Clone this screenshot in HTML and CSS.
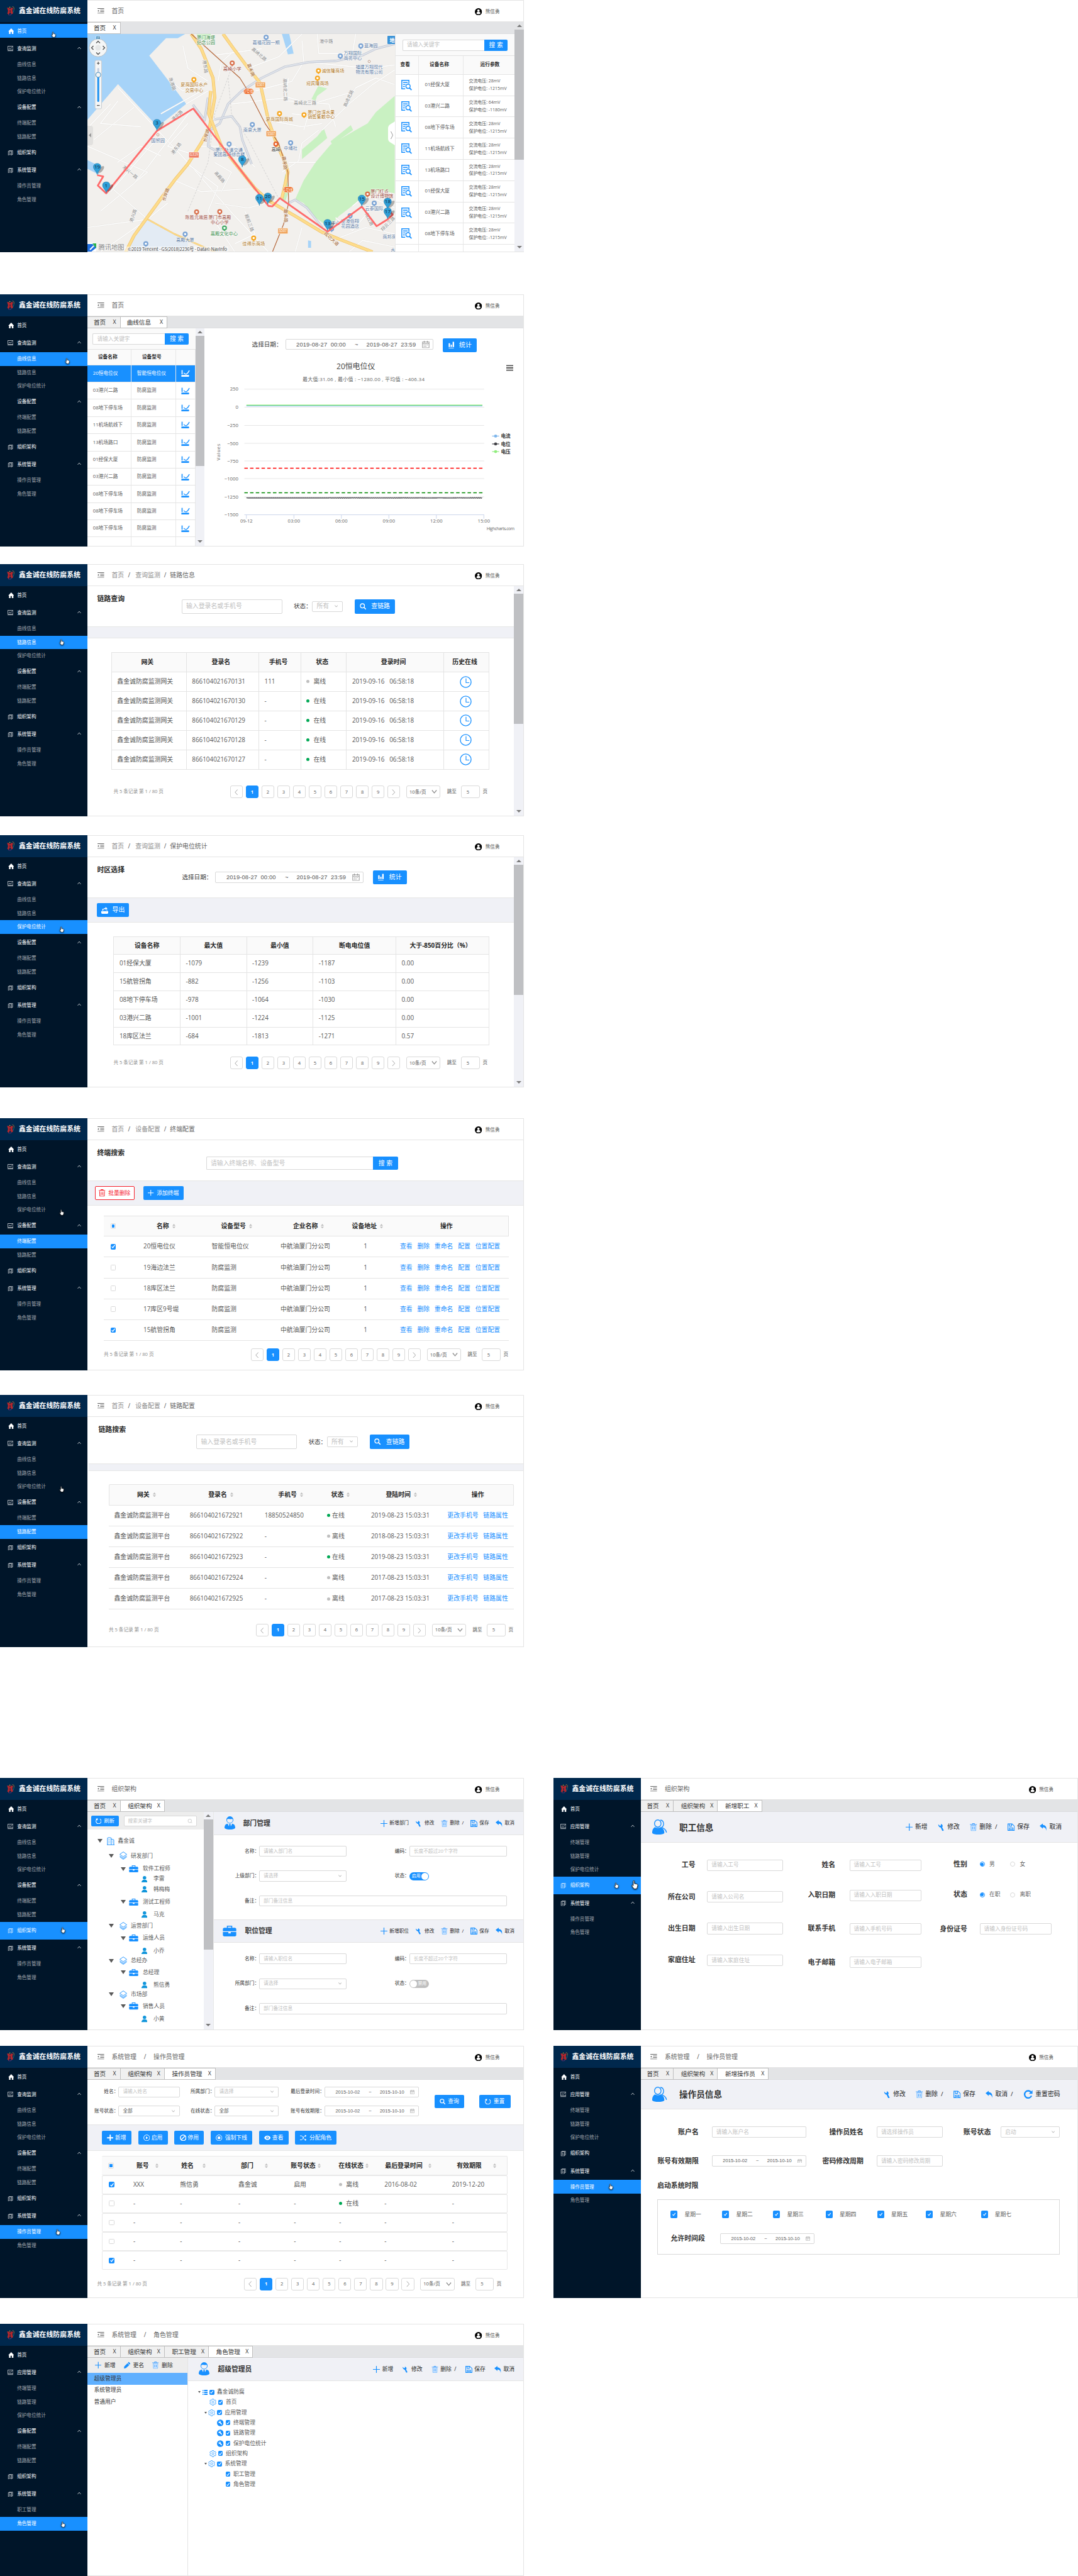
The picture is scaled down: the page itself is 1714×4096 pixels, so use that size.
FILE: index.html
```html
<!DOCTYPE html>
<html lang="zh-CN">
<head>
<meta charset="utf-8">
<title>鑫金诚在线防腐系统</title>
<link rel="stylesheet" href="styles.css">
</head>
<body>
<svg class="defs" width="0" height="0">
  <symbol id="i-logo" viewBox="0 0 60 76"><path fill="#b3282d" d="M0 12 16 12 25 22 36 11 50 14 44 34 50 60 36 66 25 50 14 68 2 62 8 38z"/><path fill="#00284d" d="M23 30h4l2 18h-7z"/><path fill="none" stroke="#f0a030" stroke-width="3" d="M44 2c12 0 16 12 13 26"/><path fill="none" stroke="#2aa198" stroke-width="3" d="M57 28c-1 12-4 18-8 24"/><path fill="none" stroke="#c0389a" stroke-width="3" d="M38 66c-8 10-20 10-28 4"/><circle cx="23" cy="8" r="4" fill="#f5c518"/></symbol>
  <symbol id="i-home" viewBox="0 0 16 16"><path fill="currentColor" d="M8 0 16 8.5H14V16H9.7V10H6.3V16H2V8.5H0z"/></symbol>
  <symbol id="i-chart" viewBox="0 0 16 14"><path fill="none" stroke="currentColor" stroke-width="1.2" d="M.6.6h14.8v10.2H.6zM0 13.3h16M3 7l2-2 2 2 2-2 1 1 3-3"/></symbol>
  <symbol id="i-doc" viewBox="0 0 14 16"><path fill="none" stroke="currentColor" stroke-width="1.2" d="M3.6 2.5V.6h9.8v12h-2M.6 2.6h9.8v12.8H.6zM3 6h3M3 9h5M3 12h5"/></symbol>
  <symbol id="i-up" viewBox="0 0 10 7"><path fill="none" stroke="currentColor" stroke-width="1.4" d="m.8 6.4 4.2-5 4.2 5"/></symbol>
  <symbol id="i-down" viewBox="0 0 10 7"><path fill="none" stroke="currentColor" stroke-width="1.5" d="m.8.6 4.2 5 4.2-5"/></symbol>
  <symbol id="i-left" viewBox="0 0 7 12"><path fill="none" stroke="currentColor" d="M6 .5 1 6l5 5.500"/></symbol>
  <symbol id="i-right" viewBox="0 0 7 12"><path fill="none" stroke="currentColor" d="m1 .5 5 5.500-5 5.500"/></symbol>
  <symbol id="i-fold" viewBox="0 0 20 16"><path fill="none" stroke="currentColor" stroke-width="1.8" d="M0 1h20M8 5.700h12M8 10.300h12M0 15h20"/><path fill="currentColor" d="M0 8l4-2.800v5.600z"/></symbol>
  <symbol id="i-user" viewBox="0 0 20 20"><circle cx="10" cy="10" r="10" fill="#000"/><circle cx="10" cy="6.800" r="3.400" fill="#fff"/><path fill="#fff" d="M4.500 14.500c0-4 3-4.500 5.500-4.500s5.500.5 5.500 4.500c-1.500 3-9.500 3-11 0z"/></symbol>
  <symbol id="i-hand" viewBox="0 0 16 20"><path fill="#fff" stroke="#222" stroke-width="1.300" d="M5 1.500c0-1.300 2.600-1.300 2.600 0V7l6 1.500c1.500.4 1.600 1.500 1.400 3l-1 4.500-1.500 3H6.500L2 12.500c-1-1.600.6-2.600 1.800-1.500L5 12z"/></symbol>
  <symbol id="i-search" viewBox="0 0 16 16"><circle cx="6.500" cy="6.500" r="5" fill="none" stroke="currentColor" stroke-width="2"/><path stroke="currentColor" stroke-width="2.400" d="m10.500 10.500 4.700 4.700"/></symbol>
  <symbol id="i-lens" viewBox="0 0 16 16"><circle cx="7" cy="7" r="6" fill="none" stroke="currentColor"/><path stroke="currentColor" d="m11.300 11.300 4.200 4.200"/></symbol>
  <symbol id="i-bars" viewBox="0 0 16 20"><path fill="currentColor" d="M0 5h4v11H0zM6 9h3.500v7H6zM11.500 1H16v15h-4.500zM0 18.500h15V20H0z"/></symbol>
  <symbol id="i-export" viewBox="0 0 18 18"><path fill="currentColor" d="M0 11h18v5.500L16 18H2l-2-1.500zM3 10V5h3v1.500H5V10h9V7h1.500v3z"/><path fill="currentColor" d="M6 8c0-4 2-5 5-5V0l5 4-5 4V5.500c-3 0-4 1-5 2.500z"/></symbol>
  <symbol id="i-trash" viewBox="0 0 16 18"><path fill="none" stroke="currentColor" stroke-width="1.600" d="M0 3h16M5.500 3V.8h5V3M2 5l.5 12.200h11L14 5M6 7v7M10 7v7"/></symbol>
  <symbol id="i-bin" viewBox="0 0 16 18"><path fill="#cfe6ff" stroke="#69b4ff" stroke-width="1.200" d="M2.300 5l.4 12.300h10.600L13.700 5z"/><path fill="none" stroke="#3d9dff" stroke-width="1.400" d="M0 3h16M5.500 3V.8h5V3M6 8v6M10 8v6"/></symbol>
  <symbol id="i-plus" viewBox="0 0 16 16"><path stroke="currentColor" stroke-width="1.700" d="M8 0v16M0 8h16"/></symbol>
  <symbol id="i-plusb" viewBox="0 0 16 16"><path stroke="currentColor" stroke-width="3" stroke-linecap="round" d="M8 1.500v13M1.500 8h13"/></symbol>
  <symbol id="i-cal" viewBox="0 0 16 16"><path fill="none" stroke="currentColor" stroke-width="1.400" d="M.8 2.500h14.400v12.700H.8zM.8 6h14.400M4.500 0v4M11.500 0v4"/><path stroke="currentColor" stroke-width="1.400" stroke-dasharray="2 1.500" d="M3.500 9h9.500M3.500 12h6"/></symbol>
  <symbol id="i-building" viewBox="0 0 20 20"><path fill="none" stroke="currentColor" stroke-width="1.500" d="M1.500 19V2l4-1.200L11 2v17M11 5l6.500 1.500V19M0 19.200h19.500M4 6h1.500M7 6h1.500M4 10h1.500M7 10h1.500M4 14h1.500M7 14h1.500M13.500 10H15M13.500 14H15"/></symbol>
  <symbol id="i-layers" viewBox="0 0 20 20"><path fill="none" stroke="currentColor" stroke-width="1.400" d="m10 .9 8.500 6-8.500 6-8.500-6zM1.500 10.500l8.500 6 8.500-6M1.500 13.200l8.500 6 8.500-6"/></symbol>
  <symbol id="i-bag" viewBox="0 0 20 16"><path fill="currentColor" d="M6 3V0h8v3h4.500L20 4.500V8.300H0V4.500L1.500 3zM7.500 3h5V1.400h-5zM0 9.300h8.200v2.200h3.600V9.300H20V14.500L18.500 16h-17L0 14.500z"/></symbol>
  <symbol id="i-person" viewBox="0 0 14 15"><circle cx="7" cy="4" r="4" fill="currentColor"/><path fill="currentColor" d="M0 15v-2.500L3.500 8.500h7L14 12.500V15z"/></symbol>
  <symbol id="i-manager" viewBox="0 0 32 40"><circle cx="16" cy="11" r="9.500" fill="none" stroke="currentColor" stroke-width="1.800"/><path fill="currentColor" d="M6 11c0-15 21-14 20 0-2-6-6-2-10-3-4-.5-8-1-10 3zM0 35c0-9 4-12 9-13l7 13 7-13c5 1 9 4 9 13-5 6-27 6-32 0zM14 23h4l1 9-3 4-3-4z"/></symbol>
  <symbol id="i-staff" viewBox="0 0 46 46"><ellipse cx="17" cy="12" rx="10" ry="11" fill="none" stroke="currentColor" stroke-width="2.600"/><path fill="none" stroke="currentColor" stroke-width="2.600" d="M25 1.500c11 1 13 16 4 22 8 4 13 7 14.500 16"/><path fill="currentColor" d="M8 23c6 3 12 3 18 0 8 4 11 9 11 18-4 6-32 6-37 0 0-9 2-14 8-18z"/></symbol>
  <symbol id="i-wrench" viewBox="0 0 16 18"><path fill="currentColor" d="M1 2.500 4.500 6 7 5V1.500l3 2.200c1.500 2 1.300 4-.2 5.500l3.500 6.500c0 2-2.300 2.500-3.500 1.200L6.500 9.800C3 9.500.5 6 1 2.500z"/></symbol>
  <symbol id="i-save" viewBox="0 0 18 18"><path fill="none" stroke="currentColor" stroke-width="1.700" d="M1 1h10l6 5.500V17H1zM4.500 1v5.500H10V1M4.500 17v-6h9v6M6 14h6"/></symbol>
  <symbol id="i-undo" viewBox="0 0 18 18"><path fill="currentColor" d="M0 6 8 0v3.500c7 .5 10 5 8.500 14.500C16 12 13 9.500 8 9.500V13z"/></symbol>
  <symbol id="i-reload" viewBox="0 0 16 16"><path fill="none" stroke="currentColor" stroke-width="1.700" d="M11.500 1.800A7 7 0 1 1 4 2.200"/><path fill="currentColor" d="M0 1.800 6 .5 5 6.500z"/></symbol>
  <symbol id="i-cycle" viewBox="0 0 18 18"><path fill="none" stroke="currentColor" stroke-width="3" d="M15 5a7.300 7.300 0 1 0 .8 7"/><path fill="currentColor" d="M17.800.8V8h-7.300z"/></symbol>
  <symbol id="i-gear" viewBox="0 0 20 20"><path fill="none" stroke="currentColor" stroke-width="1.300" d="M8 1h4l.6 2.600 2 1L17 3.800l2 3.400L17.200 9v2l1.800 1.800-2 3.400-2.400-.8-2 1L12 19H8l-.6-2.600-2-1-2.400.8-2-3.400L2.800 11V9L1 7.200l2-3.400 2.400.8 2-1z"/><circle cx="10" cy="10" r="3" fill="none" stroke="currentColor" stroke-width="1.300"/></symbol>
  <symbol id="i-tool" viewBox="0 0 18 18"><circle cx="9" cy="9" r="9" fill="currentColor"/><path fill="#fff" d="M4 5l2 2 1.500-1.500-1.500-2c3-.5 4.500 1.500 4 4l4 4.500-2 2-4.200-4.500C5.500 10 3.700 8 4 5z"/></symbol>
  <symbol id="i-list" viewBox="0 0 16 16"><path fill="currentColor" d="M0 1h3v3H0zM5 0h11v4H5zM0 7h3v3H0zM5 6h11v4H5zM0 13h3v3H0zM5 12h11v4H5z"/></symbol>
  <symbol id="i-pencil" viewBox="0 0 18 18"><path fill="currentColor" d="M13 0l5 4.500-2.300 2.800-5-4.500zM9.800 3.800l5 4.600L5.500 17 0 18l1-5.500z"/></symbol>
  <symbol id="i-query" viewBox="0 0 30 30"><path fill="none" stroke="currentColor" stroke-width="2.600" d="M11 25H1.500V1.500h20V10M5 7.500h13M5 13h7M5 18.500h5"/><circle cx="19" cy="18" r="6" fill="none" stroke="currentColor" stroke-width="2.600"/><path stroke="currentColor" stroke-width="3.200" d="m23 22.500 6 6"/></symbol>
  <symbol id="i-curve" viewBox="0 0 24 20"><path fill="none" stroke="currentColor" stroke-width="3" d="M2 1v12"/><path fill="none" stroke="currentColor" stroke-width="2.400" d="M7 9c3 4 5 4 8 3 4-2 6-6 8-10"/><path fill="currentColor" d="M0 15h21l2 2.500L21 20H0z"/></symbol>
  <symbol id="i-clock" viewBox="0 0 20 20"><circle cx="10" cy="10" r="9" fill="none" stroke="currentColor" stroke-width="1.400"/><path fill="none" stroke="currentColor" stroke-width="1.200" d="M10.500 4v7H16"/></symbol>
  <symbol id="i-play" viewBox="0 0 18 18"><circle cx="9" cy="9" r="8" fill="none" stroke="currentColor" stroke-width="1.700"/><path fill="currentColor" d="M7 5.300 12.500 9 7 12.700z"/></symbol>
  <symbol id="i-ban" viewBox="0 0 18 18"><circle cx="9" cy="9" r="7.600" fill="none" stroke="currentColor" stroke-width="2.600"/><path stroke="currentColor" stroke-width="2.400" d="M14 4 4 14"/></symbol>
  <symbol id="i-stop" viewBox="0 0 18 18"><circle cx="9" cy="9" r="8" fill="none" stroke="currentColor" stroke-width="1.600"/><path fill="currentColor" d="M5.500 5.500h7v7h-7z"/></symbol>
  <symbol id="i-eye" viewBox="0 0 18 12"><path fill="currentColor" d="M0 6c4-8 14-8 18 0-4 8-14 8-18 0z"/><circle cx="9" cy="6" r="3.400" fill="#1890ff"/><circle cx="9" cy="6" r="1.600" fill="#fff"/></symbol>
  <symbol id="i-shuffle" viewBox="0 0 20 18"><path fill="none" stroke="currentColor" stroke-width="1.900" d="M0 3h4c6 0 5 12 13 12M0 15h4c6 0 5-12 13-12"/><path fill="currentColor" d="M15 0l5 3-5 3.500zM15 11.500l5 3.500-5 3z"/></symbol>
  <symbol id="i-sort" viewBox="0 0 8 12"><path fill="#bfbfbf" d="M4 0l4 5H0zM4 12 0 7h8z"/></symbol>
  <symbol id="i-check" viewBox="0 0 10 10"><path fill="none" stroke="#fff" stroke-width="1.600" d="m2 5.200 2.200 2.300L8.200 2"/></symbol>
  <symbol id="i-pin" viewBox="0 0 26 38"><path fill="#2f9fd8" stroke="#1b6f9f" d="M13 37C12 27 1 22 1 12a12 11 0 0 1 24 0c0 10-11 15-12 25z"/></symbol>
</svg>

<div class="board">

<section class="screen r1">
  <aside class="side" data-menu="monitor" data-active="首页" data-cursor="85,54.500"></aside>
  <div class="main">
    <header data-path="首页"></header>
    <div class="split">
      <div class="overview">
        <nav class="tabs" data-tabs="首页"></nav>
        <div class="overview-body">
          <div class="map"><svg id="map" width="489" height="347"></svg></div>
          <div class="devices">
            <div class="lookup"><div class="input ph">请输入关键字</div><div class="btn go">搜 索</div></div>
            <div class="dev-grid dev-head"><b>查看</b><b>设备名称</b><b>运行参数</b></div>
            <div id="dev-rows"></div>
          </div>
        </div>
      </div>
      <div class="scroll gray"></div>
    </div>
  </div>
</section>

<section class="screen r2">
  <aside class="side" data-menu="monitor" data-active="曲线信息" data-cursor="107,106"></aside>
  <div class="main">
    <header data-path="首页"></header>
    <nav class="tabs" data-tabs="首页,曲线信息"></nav>
    <div class="split">
      <div class="curve-list">
        <div class="lookup"><div class="input ph">请输入关键字</div><div class="btn go">搜 索</div></div>
        <div class="curve-grid curve-head"><b>设备名称</b><b>设备型号</b><b></b></div>
        <div id="curve-rows"></div>
      </div>
      <div class="scroll"></div>
      <div class="curve-chart">
        <div class="query"><span class="lab">选择日期：</span><div class="range big"></div><div class="btn"><svg><use href="#i-bars"/></svg>统计</div></div>
        <svg id="chart" width="507" height="300"></svg>
      </div>
    </div>
  </div>
</section>

<section class="screen r3">
  <aside class="side" data-menu="monitor" data-active="链路信息" data-cursor="97.700,124"></aside>
  <div class="main">
    <header data-path="首页,查询监测,链路信息"></header>
    <div class="split">
      <div class="page">
        <div class="filter"><h2>链路查询</h2>
          <div class="linkbar"><div class="input ph">输入登录名或手机号</div><span class="lab">状态：</span><div class="input sel ph">所有<svg><use href="#i-down"/></svg></div><div class="btn"><svg><use href="#i-search"/></svg>查链路</div></div>
        </div>
        <div class="strip"></div>
        <table class="link-table">
          <colgroup><col><col><col><col><col><col></colgroup>
          <thead><tr><th>网关</th><th>登录名</th><th>手机号</th><th>状态</th><th>登录时间</th><th>历史在线</th></tr></thead>
          <tbody>
            <tr><td>鑫金诚防腐监测网关</td><td>866104021670131</td><td>111</td><td><i class="dot"></i>离线</td><td>2019-09-16 &nbsp; 06:58:18</td><td><svg><use href="#i-clock"/></svg></td></tr>
            <tr><td>鑫金诚防腐监测网关</td><td>866104021670130</td><td>-</td><td><i class="dot on"></i>在线</td><td>2019-09-16 &nbsp; 06:58:18</td><td><svg><use href="#i-clock"/></svg></td></tr>
            <tr><td>鑫金诚防腐监测网关</td><td>866104021670129</td><td>-</td><td><i class="dot on"></i>在线</td><td>2019-09-16 &nbsp; 06:58:18</td><td><svg><use href="#i-clock"/></svg></td></tr>
            <tr><td>鑫金诚防腐监测网关</td><td>866104021670128</td><td>-</td><td><i class="dot on"></i>在线</td><td>2019-09-16 &nbsp; 06:58:18</td><td><svg><use href="#i-clock"/></svg></td></tr>
            <tr><td>鑫金诚防腐监测网关</td><td>866104021670127</td><td>-</td><td><i class="dot on"></i>在线</td><td>2019-09-16 &nbsp; 06:58:18</td><td><svg><use href="#i-clock"/></svg></td></tr>
          </tbody>
        </table>
        <div class="pager"></div>
      </div>
      <div class="scroll"></div>
    </div>
  </div>
</section>

<section class="screen r4">
  <aside class="side" data-menu="monitor" data-active="保护电位统计" data-cursor="97.700,149.500"></aside>
  <div class="main">
    <header data-path="首页,查询监测,保护电位统计"></header>
    <div class="split">
      <div class="page">
        <div class="filter"><h2>时区选择</h2>
          <div class="query"><span class="lab">选择日期：</span><div class="range big"></div><div class="btn"><svg><use href="#i-bars"/></svg>统计</div></div>
        </div>
        <div class="strip"><div class="btn"><svg><use href="#i-export"/></svg>导出</div></div>
        <table class="stat-table">
          <colgroup><col><col><col><col><col></colgroup>
          <thead><tr><th>设备名称</th><th>最大值</th><th>最小值</th><th>断电电位值</th><th>大于-850百分比（%）</th></tr></thead>
          <tbody>
            <tr><td>01经保大厦</td><td>-1079</td><td>-1239</td><td>-1187</td><td>0.00</td></tr>
            <tr><td>15航管拐角</td><td>-882</td><td>-1256</td><td>-1103</td><td>0.00</td></tr>
            <tr><td>08地下停车场</td><td>-978</td><td>-1064</td><td>-1030</td><td>0.00</td></tr>
            <tr><td>03港兴二路</td><td>-1001</td><td>-1224</td><td>-1125</td><td>0.00</td></tr>
            <tr><td>18库区法兰</td><td>-684</td><td>-1813</td><td>-1271</td><td>0.57</td></tr>
          </tbody>
        </table>
        <div class="pager"></div>
      </div>
      <div class="scroll"></div>
    </div>
  </div>
</section>

<section class="screen r5">
  <aside class="side" data-menu="monitor" data-deviceicon="1" data-active="终端配置" data-cursor="97.700,149.800"></aside>
  <div class="main">
    <header data-path="首页,设备配置,终端配置"></header>
    <div class="filter"><h2>终端搜索</h2><div class="lookup"><div class="input ph">请输入终端名称、设备型号</div><div class="btn go">搜 索</div></div></div>
    <div class="strip"><div class="btn danger"><svg><use href="#i-trash"/></svg>批量删除</div><div class="btn"><svg><use href="#i-plus"/></svg>添加终端</div></div>
    <div class="term">
      <div class="term-grid head"><div><i class="cb half"></i></div><b>名称<svg><use href="#i-sort"/></svg></b><b>设备型号<svg><use href="#i-sort"/></svg></b><b>企业名称<svg><use href="#i-sort"/></svg></b><b>设备地址<svg><use href="#i-sort"/></svg></b><b>操作</b></div>
      <div id="term-rows"></div>
    </div>
    <div class="pager wide"></div>
  </div>
</section>

<section class="screen r6">
  <aside class="side" data-menu="monitor" data-deviceicon="1" data-active="链路配置" data-cursor="97.700,149.800"></aside>
  <div class="main">
    <header data-path="首页,设备配置,链路配置"></header>
    <div class="filter"><h2>链路搜索</h2>
      <div class="linkbar"><div class="input ph">输入登录名或手机号</div><span class="lab">状态：</span><div class="input sel ph">所有<svg><use href="#i-down"/></svg></div><div class="btn"><svg><use href="#i-search"/></svg>查链路</div></div>
    </div>
    <div class="strip"></div>
    <div class="gate">
      <div class="gate-grid head"><b>网关<svg><use href="#i-sort"/></svg></b><b>登录名<svg><use href="#i-sort"/></svg></b><b>手机号<svg><use href="#i-sort"/></svg></b><b>状态<svg><use href="#i-sort"/></svg></b><b>登陆时间<svg><use href="#i-sort"/></svg></b><b>操作</b></div>
      <div id="gate-rows"></div>
    </div>
    <div class="pager wide"></div>
  </div>
</section>

<section class="screen r7">
  <aside class="side" data-menu="monitor" data-active="组织架构" data-cursor="99.800,242.300"></aside>
  <div class="main">
    <header data-path="组织架构"></header>
    <nav class="tabs" data-tabs="首页,组织架构"></nav>
    <div class="split">
      <div class="org">
        <div class="org-bar"><div class="btn"><svg><use href="#i-reload"/></svg>刷新</div><div class="input ph">搜索关键字<svg><use href="#i-lens"/></svg></div></div>
        <ul class="tree">
          <li class="l0"><i class="caret"></i><svg><use href="#i-building"/></svg>鑫金诚</li>
          <li class="l1"><i class="caret"></i><svg><use href="#i-layers"/></svg>研发部门</li>
          <li class="l2"><i class="caret"></i><svg><use href="#i-bag"/></svg>软件工程师</li>
          <li class="l3"><svg><use href="#i-person"/></svg>李雷</li>
          <li class="l3"><svg><use href="#i-person"/></svg>韩梅梅</li>
          <li class="l2"><i class="caret"></i><svg><use href="#i-bag"/></svg>测试工程师</li>
          <li class="l3"><svg><use href="#i-person"/></svg>马克</li>
          <li class="l1"><i class="caret"></i><svg><use href="#i-layers"/></svg>运营部门</li>
          <li class="l2"><i class="caret"></i><svg><use href="#i-bag"/></svg>运维人员</li>
          <li class="l3"><svg><use href="#i-person"/></svg>小乔</li>
          <li class="l1"><i class="caret"></i><svg><use href="#i-layers"/></svg>总经办</li>
          <li class="l2"><i class="caret"></i><svg><use href="#i-bag"/></svg>总经理</li>
          <li class="l3"><svg><use href="#i-person"/></svg>熊信勇</li>
          <li class="l1"><i class="caret"></i><svg><use href="#i-layers"/></svg>市场部</li>
          <li class="l2"><i class="caret"></i><svg><use href="#i-bag"/></svg>销售人员</li>
          <li class="l3"><svg><use href="#i-person"/></svg>小黄</li>
        </ul>
      </div>
      <div class="scroll"></div>
      <div class="org-forms">
        <div class="bar"><svg class="lead"><use href="#i-manager"/></svg><h3>部门管理</h3><div class="acts" data-acts="plus:新增部门,wrench:修改,bin:删除 /,save:保存,undo:取消"></div></div>
        <div class="form">
          <label>名称：</label><div class="input ph">请输入部门名</div><label>编码：</label><div class="input ph">长度不超过20个字符</div>
          <label>上级部门：</label><div class="input sel ph">请选择<svg><use href="#i-down"/></svg></div><label>状态：</label><div class="switch on">启用</div>
          <label>备注：</label><div class="input ph span">部门备注信息</div>
        </div>
        <div class="bar second"><svg class="lead"><use href="#i-bag"/></svg><h3>职位管理</h3><div class="acts" data-acts="plus:新增职位,wrench:修改,bin:删除 /,save:保存,undo:取消"></div></div>
        <div class="form">
          <label>名称：</label><div class="input ph">请输入职位名</div><label>编码：</label><div class="input ph">长度不超过20个字符</div>
          <label>所属部门：</label><div class="input sel ph">请选择<svg><use href="#i-down"/></svg></div><label>状态：</label><div class="switch">禁用</div>
          <label>备注：</label><div class="input ph span">部门备注信息</div>
        </div>
      </div>
    </div>
  </div>
</section>

<section class="screen r7 right">
  <aside class="side" data-menu="app" data-active="组织架构" data-cursor="100,170.600" data-cursor2="129,170"></aside>
  <div class="main">
    <header data-path="组织架构"></header>
    <nav class="tabs" data-tabs="首页,组织架构,新增职工"></nav>
    <div class="bar"><svg class="lead"><use href="#i-staff"/></svg><h3>职工信息</h3><div class="acts" data-acts="plus:新增,wrench:修改,bin:删除 /,save:保存,undo:取消"></div></div>
    <div class="staff-form">
      <div class="col c1"><div><label>工号</label><div class="input ph">请输入工号</div></div><div><label>所在公司</label><div class="input ph">请输入公司名</div></div><div><label>出生日期</label><div class="input ph">请输入出生日期</div></div><div><label>家庭住址</label><div class="input ph">请输入家庭住址</div></div></div>
      <div class="col c2"><div><label>姓名</label><div class="input ph">请输入工号</div></div><div><label>入职日期</label><div class="input ph">请输入入职日期</div></div><div><label>联系手机</label><div class="input ph">请输入手机号码</div></div><div><label>电子邮箱</label><div class="input ph">请输入电子邮箱</div></div></div>
      <div class="col c3"><div><label>性别</label><i class="radio on"></i><span>男</span><i class="radio"></i><span>女</span></div><div><label>状态</label><i class="radio on"></i><span>在职</span><i class="radio"></i><span>离职</span></div><div><label>身份证号</label><div class="input ph">请输入身份证号码</div></div></div>
    </div>
  </div>
</section>

<section class="screen r8">
  <aside class="side" data-menu="monitor" data-active="操作员管理" data-cursor="91.800,295.600"></aside>
  <div class="main">
    <header class="wide" data-path="系统管理,操作员管理"></header>
    <nav class="tabs" data-tabs="首页,组织架构,操作员管理"></nav>
    <div class="op-filter">
      <div class="op-fields">
        <label>姓名：</label><div class="input ph">请输入姓名</div><label>所属部门：</label><div class="input sel ph">请选择<svg><use href="#i-down"/></svg></div><label>最后登录时间：</label><div class="range"></div>
        <label>账号状态：</label><div class="input sel">全部<svg><use href="#i-down"/></svg></div><label>在线状态：</label><div class="input sel">全部<svg><use href="#i-down"/></svg></div><label>账号有效期限：</label><div class="range"></div>
      </div>
      <div class="btn"><svg><use href="#i-search"/></svg>查询</div><div class="btn"><svg><use href="#i-reload"/></svg>重置</div>
    </div>
    <div class="strip"><div class="btn"><svg><use href="#i-plusb"/></svg>新增</div><div class="btn"><svg><use href="#i-play"/></svg>启用</div><div class="btn"><svg><use href="#i-ban"/></svg>停用</div><div class="btn lg"><svg><use href="#i-stop"/></svg>强制下线</div><div class="btn"><svg><use href="#i-eye"/></svg>查看</div><div class="btn lg"><svg><use href="#i-shuffle"/></svg>分配角色</div></div>
    <div class="ops">
      <div class="ops-grid head"><div><i class="cb half"></i></div><b>账号<svg><use href="#i-sort"/></svg></b><b>姓名<svg><use href="#i-sort"/></svg></b><b>部门<svg><use href="#i-sort"/></svg></b><b>账号状态<svg><use href="#i-sort"/></svg></b><b>在线状态<svg><use href="#i-sort"/></svg></b><b>最后登录时间<svg><use href="#i-sort"/></svg></b><b>有效期限<svg><use href="#i-sort"/></svg></b></div>
      <div class="ops-grid"><div><i class="cb on"></i></div><span>XXX</span><span>熊信勇</span><span>鑫金诚</span><span>启用</span><span><i class="dot"></i>离线</span><span>2016-08-02</span><span>2019-12-20</span></div>
      <div class="ops-grid"><div><i class="cb"></i></div><span>-</span><span>-</span><span>-</span><span>-</span><span><i class="dot on"></i>在线</span><span>-</span><span>-</span></div>
      <div class="ops-grid"><div><i class="cb"></i></div><span>-</span><span>-</span><span>-</span><span>-</span><span>-</span><span>-</span><span>-</span></div>
      <div class="ops-grid"><div><i class="cb"></i></div><span>-</span><span>-</span><span>-</span><span>-</span><span>-</span><span>-</span><span>-</span></div>
      <div class="ops-grid"><div><i class="cb on"></i></div><span>-</span><span>-</span><span>-</span><span>-</span><span>-</span><span>-</span><span>-</span></div>
    </div>
    <div class="pager wide"></div>
  </div>
</section>

<section class="screen r8 right">
  <aside class="side" data-menu="app" data-active="操作员管理" data-cursor="91.500,224"></aside>
  <div class="main">
    <header class="wide" data-path="系统管理,操作员管理"></header>
    <nav class="tabs" data-tabs="首页,组织架构,新增操作员"></nav>
    <div class="bar"><svg class="lead"><use href="#i-staff"/></svg><h3>操作员信息</h3><div class="acts" data-acts="wrench:修改,bin:删除 /,save:保存,undo:取消 /,cycle:重置密码"></div></div>
    <div class="acct-form">
      <label>账户名</label><div class="input ph">请输入账户名</div><label>操作员姓名</label><div class="input ph">请选择操作员</div><label>账号状态</label><div class="input sel ph">启动<svg><use href="#i-down"/></svg></div>
      <label>账号有效期限</label><div class="range"></div><label>密码修改周期</label><div class="input ph">请输入密码修改周期</div>
    </div>
    <h4>启动系统时限</h4>
    <div class="limits">
      <div class="week"><span><i class="cb on"></i>星期一</span><span><i class="cb on"></i>星期二</span><span><i class="cb on"></i>星期三</span><span><i class="cb on"></i>星期四</span><span><i class="cb on"></i>星期五</span><span><i class="cb on"></i>星期六</span><span><i class="cb on"></i>星期七</span></div>
      <div class="allow"><label>允许时间段</label><div class="range"></div></div>
    </div>
  </div>
</section>

<section class="screen r9">
  <aside class="side" data-menu="role" data-active="角色管理" data-cursor="99.800,318.700"></aside>
  <div class="main">
    <header class="wide" data-path="系统管理,角色管理"></header>
    <nav class="tabs" data-tabs="首页,组织架构,职工管理,角色管理"></nav>
    <div class="split">
      <div class="roles">
        <div class="acts" data-acts="plus:新增,pencil:更名,bin:删除"></div>
        <ul><li class="sel">超级管理员</li><li>系统管理员</li><li>普通用户</li></ul>
      </div>
      <div class="role-main">
        <div class="bar"><svg class="lead"><use href="#i-manager"/></svg><h3>超级管理员</h3><div class="acts" data-acts="plus:新增,wrench:修改,bin:删除 /,save:保存,undo:取消"></div></div>
        <ul class="perms">
          <li class="p0"><i class="caret"></i><svg class="sm"><use href="#i-list"/></svg><i class="cb on"></i>鑫金诚防腐</li>
          <li class="p1"><svg><use href="#i-gear"/></svg><i class="cb on"></i>首页</li>
          <li class="p1 open"><i class="caret"></i><svg><use href="#i-gear"/></svg><i class="cb on"></i>应用管理</li>
          <li class="p2"><svg><use href="#i-tool"/></svg><i class="cb on"></i>终端管理</li>
          <li class="p2"><svg><use href="#i-tool"/></svg><i class="cb on"></i>链路管理</li>
          <li class="p2"><svg><use href="#i-tool"/></svg><i class="cb on"></i>保护电位统计</li>
          <li class="p1"><svg><use href="#i-gear"/></svg><i class="cb on"></i>组织架构</li>
          <li class="p1 open"><i class="caret"></i><svg><use href="#i-gear"/></svg><i class="cb on"></i>系统管理</li>
          <li class="p3"><i class="cb on"></i>职工管理</li>
          <li class="p3"><i class="cb on"></i>角色管理</li>
        </ul>
      </div>
    </div>
  </div>
</section>

</div>
<script src="script.js"></script>
</body>
</html>
```

FILE: styles.css
```css
* { box-sizing: border-box; }
body { margin: 0; background: #fff; color: #595959; font: 9.9px/1 "Open Sans", "Noto Sans CJK SC", sans-serif; white-space: nowrap; }
h2, h3, h4, ul { margin: 0; padding: 0; list-style: none; }
i { font-style: normal; }
svg { display: block; flex: none; }
.defs { position: absolute; }

.board { display: grid; grid-template-columns: 833px 834px; column-gap: 46.500px; grid-template-rows: 468px 429px 431px 450px 440px 609px 426px 442px 401px; height: 4096px; overflow: hidden; }
.screen { grid-column: 1; height: 401px; display: flex; position: relative; overflow: hidden; }
.r1 { grid-row: 1; } .r2 { grid-row: 2; } .r3 { grid-row: 3; } .r4 { grid-row: 4; } .r5 { grid-row: 5; }
.r6 { grid-row: 6; } .r7 { grid-row: 7; } .r8 { grid-row: 8; } .r9 { grid-row: 9; }
.screen.right { grid-column: 2; }

/* sidebar */
.side { width: 139.400px; flex: none; background: #001529; color: #fff; font-size: 7.600px; }
.brand { height: 35.300px; margin-bottom: 3.200px; background: #00284d; display: flex; align-items: center; padding-left: 11.400px; font-size: 10.900px; font-weight: 700; }
.brand svg { width: 12px; height: 14.500px; margin-right: 6.500px; }
.side .item { height: 28.150px; display: flex; align-items: center; padding-left: 11.700px; }
.side .item svg { width: 9.300px; height: 8.500px; }
.side .item .txt { margin-left: 6.200px; flex: 1; }
.side .item .arrow { width: 6px; height: 4.500px; margin: -3px 10px 0 0; opacity: .8; }
.side .item.home { height: 21.900px; margin-bottom: 3.200px; }
.side .item.home svg { width: 9.600px; height: 9.300px; margin-left: 1px; }
.side .item.home .txt { margin-left: 4.900px; }
.side .item.bare { padding-left: 21px; }
.side .sub { height: 21.830px; display: flex; align-items: center; padding-left: 27.200px; color: #a0a7ae; }
.side .cur { background: #1890ff; color: #fff; }
.cursor { position: absolute; width: 8px; height: 9.500px; transform: translate(-50%, -50%); filter: drop-shadow(0 1px 1px rgba(0,0,0,.7)); }
.cursor.large { width: 12px; height: 14px; }

/* header and tabs */
.main { flex: 1; min-width: 0; display: flex; flex-direction: column; border: 1px solid #e4e4e4; border-left: 0; }
header { height: 34.200px; flex: none; border-bottom: 1px solid #e4e4e4; display: flex; align-items: center; padding-left: 15.500px; }
header .fold { width: 10.800px; height: 8.500px; margin-right: 11.800px; color: #595959; }
header span { color: #666; }
header span.dim { color: #8c8c8c; }
header i { width: 18px; text-align: center; padding-right: 2px; }
header i ~ i { width: 15.500px; padding: 0; }
header.wide i { width: 27px; padding: 0; }
header .user { margin-left: auto; margin-right: 37.500px; display: flex; align-items: center; font-size: 7.600px; padding-top: 2px; }
header .user svg { width: 11.400px; height: 11.400px; margin-right: 5px; }
.tabs { height: 19.200px; flex: none; background: #e3e4e6; display: flex; border-bottom: 1px solid #dcdddf; }
.tabs div { width: 70.200px; height: 19.200px; background: #f0f0f0; border: 1px solid #bfbfbf; border-left-width: 0; display: flex; align-items: center; padding: 0 6px 0 11.500px; color: #333; font-size: 9.600px; flex: none; }
.tabs div:first-child { width: 52.300px; padding-left: 9.600px; }
.tabs div.n5 { width: 81px; }
.r2 .tabs div:last-child { width: 74.500px; padding-left: 10px; }
.tabs div:last-child { background: #fff; }
.tabs i { margin-left: auto; font-size: 8.800px; }
.split { flex: 1; display: flex; min-height: 0; }

/* shared controls */
.input { height: 17.400px; border: 1px solid #d9d9d9; border-radius: 2px; background: #fff; display: flex; align-items: center; padding-left: 6px; flex: none; overflow: hidden; }
.ph { color: #bfbfbf; }
.input.sel svg { width: 5.300px; height: 4px; margin: 0 7px 0 auto; color: #999; }
.btn { height: 21.800px; background: #1890ff; color: #fff; border-radius: 2px; display: flex; align-items: center; justify-content: center; flex: none; }
.btn svg { width: 9.500px; height: 9.500px; margin-right: 8px; }
.lookup { display: flex; }
.lookup .input { border-radius: 2px 0 0 2px; border-right: 0; }
.lookup .btn { border-radius: 0 2px 2px 0; width: 37.400px; height: 100%; }
.range { width: 150px; height: 17.400px; border: 1px solid #d9d9d9; border-radius: 2px; background: #fff; display: flex; align-items: center; font-family: "Liberation Sans", sans-serif; font-size: 7.600px; padding-left: 16.500px; flex: none; }
.range span { width: 39.500px; }
.range em { width: 31px; text-align: center; font-style: normal; }
.range svg { width: 7.200px; height: 6.800px; margin: 0 6px 0 auto; color: #999; }
.range.big { width: 235.500px; font-size: 9.400px; padding-left: 16.500px; }
.range.big span { width: 80px; letter-spacing: .12px; }
.range.big em { width: 31.500px; }
.range.big svg { width: 12px; height: 11.500px; margin-right: 5px; }
.scroll { width: 14.700px; flex: none; background: #f0f1f6; display: flex; flex-direction: column; align-items: center; padding: 4px 0; }
.scroll::before, .scroll::after { content: ""; border: 4px solid transparent; border-top: 0; border-bottom: 4.500px solid #7a7a7a; }
.scroll::after { transform: rotate(180deg); margin-top: auto; margin-bottom: 1px; }
.scroll b { width: 14.700px; height: 207px; background: #bfc0c3; margin-top: 3.500px; }
.scroll.gray { background: linear-gradient(#e3e4e6 20px, #f0f1f6 20px); }
.cb { width: 8.700px; height: 8.700px; border: 1px solid #d9d9d9; border-radius: 1.500px; background: #fff; display: flex; align-items: center; justify-content: center; flex: none; }
.cb.on { background: #1890ff; border-color: #1890ff; }
.cb.on svg { width: 8px; height: 8px; margin: 0; }
.cb.half::before { content: ""; width: 4.700px; height: 4.700px; background: #1890ff; }
.dot { display: inline-block; width: 5px; height: 5px; border-radius: 50%; background: #bfbfbf; margin-right: 6px; vertical-align: .8px; flex: none; }
.dot.on { background: #00a854; }
.strip { background: #f0f1f6; border-top: 1px solid #e6e6e6; border-bottom: 1px solid #e6e6e6; display: flex; align-items: center; flex: none; }
h2 { font-size: 10.950px; color: #262626; padding-left: 15px; }
.filter { height: 64px; padding-top: 14.600px; flex: none; }
.lab { color: #404040; font-size: 9.600px; }
.page { flex: 1; }
.head b, th, .dev-head b, .curve-head b { color: #262626; font-weight: 700; }
.head svg { display: inline-block; width: 5px; height: 7.500px; margin-left: 5px; vertical-align: -.5px; }

.pager { display: flex; align-items: center; height: 20px; font-size: 7.600px; }
.pager .total { width: 185.400px; color: #8c8c8c; }
.pager.wide .total { width: 233.700px; }
.pager .pg { width: 20.300px; height: 20px; margin-right: 4.720px; border: 1px solid #d9d9d9; border-radius: 3px; display: flex; align-items: center; justify-content: center; flex: none; padding-top: 1px; }
.pager .pg.on { background: #1890ff; border-color: #1890ff; color: #fff; font-weight: 700; }
.pager .pg svg { width: 5.500px; height: 9.500px; color: #8c8c8c; }
.pager .size { width: 54.500px; margin: 0 10.200px 0 5px; justify-content: space-between; padding: 1px 4px 0; }
.pager .size svg { width: 9px; height: 6px; }
.pager .jump { width: 29.700px; margin: 0 4.500px 0 7.500px; justify-content: flex-start; padding-left: 7.500px; }

/* overview */
.overview { flex: 1; display: flex; flex-direction: column; }
.overview-body { flex: 1; display: flex; min-height: 0; }
.map { width: 488.600px; flex: none; overflow: hidden; background: #f2f0ed; }
.map text { font: 7.200px "Noto Sans CJK SC", sans-serif; text-anchor: middle; paint-order: stroke; stroke: rgba(255,255,255,.75); stroke-width: 1.200px; }
.map .pinno { font: 8px "Open Sans"; stroke: none; fill: #123; }
.devices { flex: 1; background: #fff; border-left: 1px solid #e8e8e8; }
.devices .lookup { height: 34.300px; background: #fafafa; padding: 8.500px 11px 8px 11px; border-bottom: 1px solid #e2e2e2; font-size: 8.700px; }
.devices .lookup .input { width: 130px; height: 17.800px; }
.devices .lookup .btn { height: 17.800px; font-size: 9.800px; }
.dev-grid { display: grid; grid-template-columns: 37.500px 71px 1fr; height: 33.800px; border-bottom: 1px solid #e4e4e4; font-size: 7.700px; }
.dev-head { height: 30.200px; background: #fafafa; text-align: center; }
.dev-grid > * { display: flex; align-items: center; padding-left: 9px; border-right: 1px solid #e8e8e8; }
.dev-grid > *:last-child { border-right: 0; padding-left: 8px; }
.dev-head b { justify-content: center; padding: 0 6px 0 0; }
.dev-grid svg { width: 17px; height: 17px; color: #1890ff; }
.dev-grid p { margin: 0; font-size: 6.950px; line-height: 11.900px; }

/* curve */
.curve-list { width: 171.200px; flex: none; overflow: hidden; }
.curve-list .lookup { height: 33.800px; background: #fafafa; padding: 7.600px 8px; border-bottom: 1px solid #e2e2e2; font-size: 8.700px; }
.curve-list .lookup .input { width: 115px; height: 17.900px; }
.curve-list .lookup .btn { height: 17.900px; font-size: 9.800px; }
.curve-grid { display: grid; grid-template-columns: 70px 70.500px 1fr; height: 27.380px; border-bottom: 1px solid #e4e4e4; font-size: 7.700px; }
.curve-grid > * { display: flex; align-items: center; padding-left: 8.400px; border-right: 1px solid #e8e8e8; }
.curve-head { height: 24.500px; background: #fafafa; }
.curve-head b { padding-left: 16.500px; }
.curve-grid.cur { background: #1890ff; color: #fff; }
.curve-grid svg { width: 14px; height: 11px; color: #1890ff; }
.curve-grid.cur svg { color: #fff; }
.query { display: flex; align-items: center; }
.query .lab { width: 53px; }
.query .btn { width: 54.200px; margin-left: 15px; }
.query .btn svg { width: 9.500px; height: 11px; }
.curve-chart { flex: 1; min-width: 0; }
.curve-chart .query { padding: 15.500px 0 0 75.300px; height: 40.500px; align-items: flex-start; }
.curve-chart .query .lab { padding-top: 5.500px; }
.curve-chart .range { margin-top: 1.200px; }
#chart text { font-family: "Open Sans", "Noto Sans CJK SC", sans-serif; fill: #666; }

/* link tables */
.linkbar { display: flex; align-items: center; padding-left: 149.500px; margin-top: -4.600px; }
.linkbar .input { width: 160px; height: 23.400px; }
.linkbar .lab { width: 47.500px; padding-left: 18px; }
.linkbar .input.sel { width: 49px; height: 17.200px; margin-right: 18.800px; }
.linkbar .btn { width: 63.500px; height: 23.400px; }
.linkbar .btn svg { width: 10.500px; height: 10.500px; }
.filter h2 { height: 11px; margin-bottom: 0; }
.r3 .linkbar { margin-top: -5.200px; }
.r3 .strip { height: 19px; }
table { border-collapse: collapse; table-layout: fixed; }
th { background: #fafafa; text-align: center; }
th, td { border: 1px solid #e4e4e4; padding: 0; }
td { padding-left: 8.500px; }
.link-table { width: 600.700px; margin: 22px 0 0 37.400px; }
.link-table tr { height: 30.950px; }
.link-table col:nth-child(1) { width: 119px; } .link-table col:nth-child(2) { width: 115.300px; } .link-table col:nth-child(3) { width: 66.800px; }
.link-table col:nth-child(4) { width: 72.600px; } .link-table col:nth-child(5) { width: 154.300px; } .link-table col:nth-child(6) { width: 72.700px; }
.link-table th { padding-right: 5px; }
.link-table svg { width: 19px; height: 19px; margin-left: 17px; color: #1890ff; }
.r3 .pager { margin: 25px 0 0 41px; }

.r4 .query { padding-left: 150px; margin-top: -4.800px; }
.r4 .strip { height: 40px; padding-left: 15px; }
.r4 .strip .btn { width: 50.700px; }
.r4 .strip .btn svg { width: 11px; height: 11px; margin-right: 6.500px; }
.stat-table { width: 596.500px; margin: 21.500px 0 0 41px; }
.stat-table tr { height: 28.800px; }
.stat-table col:nth-child(-n+3) { width: 105.600px; } .stat-table col:nth-child(4) { width: 131.900px; } .stat-table col:nth-child(5) { width: 147.800px; }
.stat-table th:nth-child(5) { padding-right: 6px; }
.r4 .pager { margin: 17.500px 0 0 41px; }

/* terminals */
.r5 .lookup { padding-left: 188.500px; height: 21.600px; }
.r5 .lookup .input { width: 265px; height: 21.600px; }
.r5 .lookup .btn { width: 40px; }
.r5 .strip { height: 40px; padding-left: 11.200px; gap: 14px; font-size: 8.800px; }
.r5 .strip .btn { width: 63.500px; }
.r5 .strip .btn svg { margin-right: 4.500px; }
.btn.danger { background: #fff; border: 1px solid #f5222d; color: #f5222d; }
.btn.danger svg { width: 10.500px; height: 11.500px; }
.term { width: 644.500px; margin: 15.500px 0 0 25.600px; }
.term-grid { display: grid; grid-template-columns: 63px 108.400px 109.600px 113.600px 76.400px 1fr; align-items: center; height: 33.150px; border-bottom: 1px solid #e4e4e4; }
.term-grid > div:first-child, .ops-grid > div:first-child { padding-left: 10.700px; }
.term-grid.head { height: 33.600px; background: #fafafa; border-top: 1px solid #e4e4e4; border-right: 1px solid #e4e4e4; }
.term-grid.head b:nth-child(2) { padding-left: 21px; } .term-grid.head b:nth-child(3) { padding-left: 15px; }
.term-grid.head b:nth-child(4) { padding-left: 20px; } .term-grid.head b:nth-child(6) { padding-left: 64px; }
.term-grid > span:nth-child(5) { padding-left: 18.700px; }
.links { display: flex; gap: 7.700px; color: #1890ff; }
.r5 .pager { margin: 12px 0 0 25.600px; }

/* gateways */
.r6 .filter { height: 73.600px; }
.r6 h2 { padding-left: 17px; }
.r6 .linkbar { padding-left: 173px; margin-top: 2px; }
.r6 .strip { height: 12px; margin-left: 2px; }
.gate { width: 644.500px; margin: 21.300px 0 0 33.600px; }
.gate-grid { display: grid; grid-template-columns: 120.200px 119.100px 98.800px 70.400px 121.300px 1fr; align-items: center; height: 33.150px; border-bottom: 1px solid #e4e4e4; padding-left: 8.500px; }
.gate-grid.head { height: 33.600px; background: #fafafa; border: 1px solid #e4e4e4; border-radius: 2px 2px 0 0; }
.gate-grid.head b:nth-child(1) { padding-left: 35.500px; } .gate-grid.head b:nth-child(2) { padding-left: 28.500px; } .gate-grid.head b:nth-child(3) { padding-left: 20.500px; }
.gate-grid.head b:nth-child(4) { padding-left: 6px; } .gate-grid.head b:nth-child(5) { padding-left: 22.500px; } .gate-grid.head b:nth-child(6) { padding-left: 37.500px; }
.gate-grid .dot { margin-right: 3.500px; }
.r6 .pager { margin: 22.400px 0 0 33.600px; }

/* organisation */
.org { width: 184.500px; flex: none; overflow: hidden; }
.org-bar { height: 28px; background: #ededed; display: flex; align-items: center; padding-left: 5.900px; font-size: 8.200px; }
.org-bar .btn { width: 43.300px; height: 16.400px; margin-right: 8px; }
.org-bar .btn svg { margin-right: 4px; }
.org-bar .input { width: 116.400px; font-size: 7.700px; }
.org-bar .input svg { width: 8.500px; height: 7.500px; margin: 0 5px 0 auto; color: #999; }
.tree { padding-top: 10.700px; font-size: 8.750px; }
.tree li { height: 14px; display: flex; align-items: center; color: #595959; }
.caret { border: 4px solid transparent; border-top: 6px solid #595959; border-bottom: 0; flex: none; }
.tree svg { color: #1890ff; }
.tree .l0 { padding-left: 16px; } .tree .l0 svg { width: 12.500px; height: 13px; margin: 0 4.500px 0 7px; }
.tree .l1 { padding-left: 34px; } .tree .l1 svg { width: 14px; height: 13px; margin: 0 5px 0 7.500px; }
.tree .l2 { padding-left: 53px; } .tree .l2 svg { width: 15px; height: 11.500px; margin: 0 6.500px 0 5px; }
.tree .l3 { padding-left: 85.400px; } .tree .l3 svg { width: 9.600px; height: 10.500px; margin-right: 9.700px; color: #1296db; }
.tree li:nth-child(2) { margin-top: 9.900px; } .tree li:nth-child(3) { margin-top: 6.600px; }
.tree li:nth-child(4), .tree li:nth-child(5) { margin-top: 2.300px; }
.tree li:nth-child(6), .tree li:nth-child(7), .tree li:nth-child(10), .tree li:nth-child(13), .tree li:nth-child(16) { margin-top: 6.300px; }
.tree li:nth-child(8) { margin-top: 3.700px; } .tree li:nth-child(9) { margin-top: 5.200px; } .tree li:nth-child(11) { margin-top: 1.900px; }
.tree li:nth-child(12), .tree li:nth-child(15) { margin-top: 4.500px; } .tree li:nth-child(14) { margin-top: .9px; }
.org-forms { flex: 1; border-left: 1px solid #e8e8e8; font-size: 7.700px; }
.bar { height: 36.500px; background: #f0f1f6; border-bottom: 1px solid #e4e4e4; display: flex; align-items: center; flex: none; }
.bar .lead { width: 17px; height: 21.500px; margin: 0 13px 0 17px; color: #1890ff; }
.bar h3 { font-size: 10.800px; color: #333; }
.bar.second { border-top: 1px solid #e4e4e4; height: 37px; margin-top: 20.600px; }
.second .lead { width: 22px; height: 17px; margin: 0 13px 0 14.800px; }
.acts { display: flex; align-items: center; color: #262626; }
.acts div { display: flex; align-items: center; }
.acts svg { width: 11px; height: 11px; margin-right: 3.600px; color: #1890ff; }
.bar .acts { margin-left: auto; margin-right: 14px; gap: 10.300px; }
.form { display: grid; grid-template-columns: 72.500px 139.400px 99.300px 155px; row-gap: 22.200px; align-items: center; padding-top: 17px; }
.form label { text-align: right; color: #333; }
.form .span { grid-column: 2 / 5; }
.switch { width: 31.500px; height: 13px; border-radius: 7px; background: #bfbfbf; color: #fff; display: flex; align-items: center; font-size: 6.900px; padding: 0 4px 0 1px; justify-content: space-between; }
.switch::before { content: ""; width: 11px; height: 11px; border-radius: 50%; background: #fff; }
.switch.on { background: #1890ff; flex-direction: row-reverse; padding: 0 1px 0 4px; }

/* staff */
.right .main .bar { height: 49px; }
.right .bar .lead { width: 24px; height: 24.500px; margin: 0 19px 0 18.200px; }
.right .bar h3 { font-size: 13.600px; }
.right .bar .acts { font-size: 9.800px; margin-right: 24.500px; gap: 16.500px; }
.right .bar .acts svg { width: 11.500px; height: 12.500px; }
.staff-form { display: flex; font-size: 8.700px; }
.staff-form .col > div { display: flex; align-items: center; height: 18.200px; }
.staff-form .input { height: 18.200px; width: 114.500px; }
.staff-form label, .acct-form label, .allow label, h4 { font-size: 10.900px; font-weight: 700; color: #333; text-align: right; }
.staff-form .c1 { width: 225.800px; padding-top: 26.300px; } .c1 label { width: 86.700px; margin-right: 18.700px; }
.staff-form .c1 .input { width: 120.400px; }
.c1 > div + div, .c2 > div + div { margin-top: 32.200px; }
.staff-form .c2 { width: 220.400px; padding-top: 26.300px; } .c2 label { width: 83.500px; margin-right: 22.400px; }
.c2 > div:nth-child(2) { margin-top: 29.800px; } .c2 > div:nth-child(3) { margin-top: 35px; } .c2 > div:nth-child(4) { margin-top: 35px; }
.staff-form .c3 { padding-top: 25px; } .c3 label { width: 72.800px; margin-right: 19.700px; } .c3 > div:nth-child(2) { margin-top: 30px; } .c3 > div:nth-child(3) { margin-top: 36.500px; }
.radio { width: 8px; height: 8px; border-radius: 50%; border: 1px solid #d9d9d9; display: flex; align-items: center; justify-content: center; margin-right: 7.500px; flex: none; }
.radio.on { border-color: #1890ff; }
.radio.on::before { content: ""; width: 4.600px; height: 4.600px; border-radius: 50%; background: #1890ff; }
.staff-form span { width: 33px; }

/* operators */
.op-filter { height: 70.800px; display: flex; align-items: center; padding-bottom: 2.500px; flex: none; font-size: 8.800px; }
.op-fields { display: grid; grid-template-columns: 49px 97.700px 55.300px 102px 72.500px 150px; row-gap: 13px; align-items: center; font-size: 7.700px; margin-right: 25px; }
.op-fields label { text-align: right; color: #333; }
.op-filter > .btn { width: 47px; margin-right: 24px; }
.op-filter > .btn:last-child { width: 49.700px; margin: 0; }
.op-filter > .btn svg { margin-right: 4px; width: 9.500px; }
.r8 .strip { height: 42px; padding-left: 22.400px; gap: 10.800px; font-size: 8.800px; }
.r8 .strip .btn { width: 47px; }
.r8 .strip .lg { width: 65.700px; }
.r8 .strip .btn svg { width: 10.500px; height: 10.500px; margin-right: 2.500px; }
.r8 .strip .lg svg { margin-right: 4px; }
.ops { margin: 8.300px 0 0 22.400px; width: 645px; }
.ops-grid { display: grid; grid-template-columns: 49.100px 74.300px 92.900px 88.100px 72.100px 72.100px 107.400px 1fr; align-items: center; height: 30.150px; border: 1px solid #e8e8e8; border-radius: 2px; }
.ops-grid.head { background: #fafafa; border-left: 0; }
.ops-grid.head b:nth-child(2) { padding-left: 6px; } .ops-grid.head b:nth-child(3) { padding-left: 3px; } .ops-grid.head b:nth-child(4) { padding-left: 5px; }
.ops-grid.head b:nth-child(5) { margin-left: -4px; } .ops-grid.head b:nth-child(7) { padding-left: 2px; } .ops-grid.head b:nth-child(8) { padding-left: 8.500px; }
.ops-grid.head b:nth-child(2) svg { margin-left: 10px; } .ops-grid.head b:nth-child(3) svg { margin-left: 14px; } .ops-grid.head b:nth-child(4) svg { margin-left: 18px; }
.ops-grid.head b:nth-child(5) svg, .ops-grid.head b:nth-child(6) svg { margin-left: 3px; } .ops-grid.head b:nth-child(7) svg { margin-left: 9px; } .ops-grid.head b:nth-child(8) svg { margin-left: 18px; }
.r8 .pager { margin: 12.300px 0 0 15px; }

.r8.right .main .bar { height: 46.200px; }
.r8.right .bar .acts { margin-right: 27px; gap: 16.500px; }
.r8.right .bar .acts div:last-child svg { width: 15.500px; height: 14px; }
.acct-form { display: grid; grid-template-columns: 112.900px 149.800px 112.300px 105.400px 92.100px 93.600px; row-gap: 27.600px; padding-top: 27.300px; align-items: center; font-size: 8.700px; }
.acct-form .input { height: 18.400px; }
.acct-form label { padding-right: 21px; }
.acct-form label:nth-of-type(3) { padding-right: 16px; }
h4 { text-align: left; margin: 24.500px 0 0 26.200px; }
.limits { margin: 16.700px 0 0 26.200px; width: 640px; height: 87.600px; border: 1px solid #d9d9d9; padding: 16.600px 0 0 20.300px; flex: none; }
.week { display: flex; font-size: 8.800px; }
.week span { display: flex; align-items: center; width: 82px; }
.week span:nth-child(2) { width: 81px; } .week span:nth-child(3) { width: 83.500px; } .week span:nth-child(5) { width: 77.600px; } .week span:nth-child(6) { width: 87.200px; }
.week .cb { width: 11px; height: 12.500px; margin-right: 11px; }
.week .cb.on svg { width: 7px; }
.allow { display: flex; align-items: center; margin-top: 23.500px; }
.allow label { width: 78.600px; text-align: left; }

/* roles */
.roles { width: 160px; flex: none; font-size: 8.800px; border-right: 1px solid #e4e4e4; }
.roles .acts { height: 23.700px; background: #ededed; padding-left: 11.500px; gap: 13px; }
.roles .acts svg { margin-right: 4.500px; width: 10.500px; height: 11.500px; }
.roles li { height: 18.450px; display: flex; align-items: center; padding-left: 10px; color: #333; }
.roles li.sel { background: #60b0ff; }
.role-main { flex: 1; }
.r9 .bar .acts { font-size: 8.800px; gap: 14px; }
.perms { padding-top: 9.500px; font-size: 8.750px; }
.perms li { height: 16.320px; display: flex; align-items: center; }
.perms svg { width: 11px; height: 11px; color: #1890ff; margin-right: 3px; }
.perms svg.sm { width: 8px; height: 8px; margin: 0 3.200px 0 3px; }
.perms .cb { width: 7.500px; height: 8px; margin-right: 4.500px; }
.perms .cb svg { width: 7px; height: 7px; }
.perms .caret { border-width: 3.300px 2.700px 0; }
.p0 { padding-left: 15.500px; } .p1 { padding-left: 33.500px; } .p1.open { padding-left: 26px; } .p1 .caret { margin-right: 2.100px; } .p2 { padding-left: 46px; } .p2 > svg { width: 10.500px; } .p3 { padding-left: 59.500px; }
```

FILE: script.js
```js
const icon = (name, cls = '') => `<svg class="${cls}"><use href="#i-${name}"/></svg>`;
const all = (sel, fn) => document.querySelectorAll(sel).forEach(fn);

// side menu: "*" marks a group; "+" is a group with its own icon and no children
const menus = {
  monitor: ['*chart 查询监测', '曲线信息', '链路信息', '保护电位统计', '*none 设备配置', '终端配置', '链路配置', '+doc 组织架构', '*doc 系统管理', '操作员管理', '角色管理'],
  app: ['*chart 应用管理', '终端管理', '链路管理', '保护电位统计', '+doc 组织架构', '*doc 系统管理', '操作员管理', '角色管理'],
  role: ['*chart 应用管理', '终端管理', '链路管理', '保护电位统计', '*none 设备配置', '终端配置', '链路配置', '+doc 组织架构', '*doc 系统管理', '职工管理', '角色管理']
};
all('.side', el => {
  const d = el.dataset;
  const cur = name => (name === d.active ? ' cur' : '');
  let html = `<div class="brand">${icon('logo')}鑫金诚在线防腐系统</div><div class="item home${cur('首页')}">${icon('home')}<span class="txt">首页</span></div>`;
  for (const entry of menus[d.menu]) {
    const m = entry.match(/^([*+])(\w+) (.+)$/);
    if (!m) { html += `<div class="sub${cur(entry)}">${entry}</div>`; continue; }
    const ic = m[2] === 'none' && d.deviceicon ? 'chart' : m[2];
    html += `<div class="item${ic === 'none' ? ' bare' : ''}${cur(m[3])}">${ic === 'none' ? '' : icon(ic)}<span class="txt">${m[3]}</span>${m[1] === '*' ? icon('up', 'arrow') : ''}</div>`;
  }
  for (const [key, cls] of [['cursor', ''], ['cursor2', ' large']]) {
    if (!d[key]) continue;
    const [x, y] = d[key].split(',');
    html += `<svg class="cursor${cls}" style="left:${x}px;top:${y}px"><use href="#i-hand"/></svg>`;
  }
  el.innerHTML = html;
});

all('header', el => {
  const parts = el.dataset.path.split(',');
  const dim = parts.length === 3;
  el.innerHTML = icon('fold', 'fold') +
    parts.map((p, i) => `<span class="${dim && i < 2 ? 'dim' : ''}">${p}</span>`).join('<i>/</i>') +
    `<div class="user">${icon('user')}熊信勇</div>`;
});
all('.tabs', el => {
  el.innerHTML = el.dataset.tabs.split(',').map(t => `<div class="n${t.length}">${t}<i>X</i></div>`).join('');
});
all('.scroll', el => { el.innerHTML = '<b></b>'; });
all('.cb.on', el => { el.innerHTML = icon('check'); });
all('.range', el => {
  const [a, b] = el.classList.contains('big') ? ['2019-08-27&nbsp; 00:00', '2019-08-27&nbsp; 23:59'] : ['2015-10-02', '2015-10-10'];
  el.innerHTML = `<span>${a}</span><em>~</em><span>${b}</span>${icon('cal')}`;
});
all('.acts', el => {
  el.innerHTML = el.dataset.acts.split(',').map(a => { const [i, t] = a.split(':'); return `<div>${icon(i)}${t.replace(' /', '&nbsp; /')}</div>`; }).join('');
});
all('.pager', el => {
  let h = `<span class="total">共 5 条记录 第 1 / 80 页</span><div class="pg">${icon('left')}</div>`;
  for (let i = 1; i < 10; i++) h += `<div class="pg${i === 1 ? ' on' : ''}">${i}</div>`;
  el.innerHTML = h + `<div class="pg">${icon('right')}</div><div class="pg size">10条/页${icon('down')}</div>跳至<div class="pg jump">5</div>页`;
});

const fill = (id, rows, fn) => { document.getElementById(id).innerHTML = rows.map(fn).join(''); };
fill('dev-rows', [['01经保大厦', 28, 1215], ['03港兴二路', 64, 1180], ['08地下停车场', 28, 1215], ['11机场航线下', 28, 1215], ['13机场路口', 28, 1215], ['01经保大厦', 28, 1215], ['03港兴二路', 28, 1215], ['08地下停车场', 28, 1215], null],
  r => r ? `<div class="dev-grid"><div>${icon('query')}</div><div>${r[0]}</div><div><p>交流电压: ${r[1]}mV<br>保护电位: -${r[2]}mV</p></div></div>` : '<div class="dev-grid"><div></div><div></div><div></div></div>');
fill('curve-rows', ['20恒电位仪', '03港兴二路', '08地下停车场', '11机场航线下', '13机场路口', '01经保大厦', '03港兴二路', '08地下停车场', '08地下停车场', '08地下停车场', ''],
  (n, i) => `<div class="curve-grid${i ? '' : ' cur'}"><div>${n}</div><div>${n && (i ? '防腐监测' : '智能恒电位仪')}</div><div>${n && icon('curve')}</div></div>`);
fill('term-rows', ['20恒电位仪', '19海边法兰', '18库区法兰', '17库区9号堤', '15航管拐角'],
  (n, i) => `<div class="term-grid"><div>${i % 4 ? '<i class="cb"></i>' : `<i class="cb on">${icon('check')}</i>`}</div><span>${n}</span><span>${i ? '防腐监测' : '智能恒电位仪'}</span><span>中航油厦门分公司</span><span>1</span><div class="links"><span>查看</span><span>删除</span><span>重命名</span><span>配置</span><span>位置配置</span></div></div>`);
fill('gate-rows', [[1, '18850524850', 1, 2019], [2, '-', 0, 2018], [3, '-', 1, 2019], [4, '-', 0, 2017], [5, '-', 0, 2017]],
  r => `<div class="gate-grid"><span>鑫金诚防腐监测平台</span><span>86610402167292${r[0]}</span><span>${r[1]}</span><span><i class="dot${r[2] ? ' on' : ''}"></i>${r[2] ? '在线' : '离线'}</span><span>${r[3]}-08-23 15:03:31</span><div class="links"><span>更改手机号</span><span>链路属性</span></div></div>`);

// chart
(() => {
  const t = (x, y, s, size, anchor = 'middle', len = '', extra = '') => `<text x="${x}" y="${y}" font-size="${size}" text-anchor="${anchor}"${len ? ` textLength="${len}"` : ''} ${extra}>${s}</text>`;
  const ys = [55.8, 84.4, 113.5, 141.9, 169.9, 198, 226.9, 255.5];
  const vals = ['250', '0', '−250', '−500', '−750', '−1000', '−1250', '−1500'];
  let h = t(240.8, 24, '20恒电位仪', 12, 'middle', 61.4, 'style="fill:#444"') + t(253, 43, '最大值:31.06 , 最小值 : −1280.00 , 平均值 : −406.34', 8, 'middle', 194);
  ys.forEach((y, i) => { h += `<path d="M63.500 ${y}H444.800" stroke="${i === 7 ? '#ccd6eb' : '#e6e6e6'}"/>` + t(54, y + 2.6, vals[i], 7.8, 'end'); });
  ['09-12', '03:00', '06:00', '09:00', '12:00', '15:00'].forEach((s, i) => { const x = 66.8 + i * 75.5; h += `<path d="M${x} 255.500v6.200" stroke="#ccd6eb"/>` + t(x, 268.300, s, 7.600); });
  h += t(0, 0, 'Values', 7.5, 'middle', 26.5, 'transform="translate(25 156) rotate(-90)"');
  h += '<path d="M66.800 82.300H442" stroke="#7cb5ec" stroke-width="1.600"/><path d="M66.800 81.200H442" stroke="#90ed7d" stroke-width="1.500"/>';
  h += '<path d="M63.500 181.600H444.800" stroke="#f00" stroke-width="1.500" stroke-dasharray="5.500 3.600"/><path d="M63.500 220.600H444.800" stroke="#080" stroke-width="1.500" stroke-dasharray="5.500 3.600"/>';
  let p = 'M66.800 228.700';
  for (let x = 68; x < 442; x += 1.5) { const a = x < 200 ? .2 : x < 300 ? .6 : 1.3; p += `L${x} ${(228.7 + Math.sin(x * 2.1) * a).toFixed(2)}`; }
  h += `<path d="${p}" fill="none" stroke="#434348" stroke-width="1.300"/>`;
  [['#7cb5ec', '电流', 130.4], ['#434348', '电位', 142.9], ['#90ed7d', '电压', 155.1]].forEach(([c, s, y]) => {
    h += `<path d="M457.500 ${y}h11" stroke="${c}" stroke-width="1.200"/><circle cx="463" cy="${y}" r="2.400" fill="${c}"/>` + t(471.5, y + 2.9, s, 7.6, 'start', '', 'style="fill:#333;font-weight:700"');
  });
  h += '<path d="M480 18.300h11M480 22h11M480 25.700h11" stroke="#555" stroke-width="1.800"/>' + t(493, 280, 'Highcharts.com', 6.8, 'end', 44.3);
  document.getElementById('chart').innerHTML = h;
})();

// map: geometry is kept in survey units and scaled to the viewport
(() => {
  const KX = .534, KY = .2583, X = x => ((x - 261) * KX).toFixed(1), Y = y => ((y - 209) * KY).toFixed(1);
  const path = (pts, attrs) => `<path d="M${pts.split(' ').map(q => { const [a, b] = q.split(','); return `${X(a)} ${Y(b)}`; }).join('L')}" fill="none" stroke-linejoin="round" ${attrs}/>`;
  const area = (pts, c) => path(pts, `style="fill:${c}"`);
  let h = '';
  h += area('261,209 552,209 530,235 495,235 445,342 555,640 470,780 352,518 261,738', '#a6d3f8');
  h += area('261,985 285,1010 296,1075 261,1040', '#a6d3f8') + area('840,209 862,209 875,330 858,335', '#a6d3f8') + area('918,1480 927,1484 927,1525 918,1525', '#a6d3f8');
  h += area('440,1345 500,1420 560,1480 560,1551 380,1551 400,1450', '#e3ebf4');
  h += area('1176,590 1120,690 1095,760 1060,800 985,890 940,1000 905,1110 880,1225 905,1250 940,1340 980,1400 1010,1330 1060,1250 1130,1170 1176,1190', '#c9f1c2');
  h += area('1045,770 1052,800 990,890 985,870', '#c9f1c2') + area('945,840 965,790 975,850 900,980 900,920', '#c9f1c2') + area('948,530 975,545 945,590 940,620 928,610', '#c9f1c2') + area('850,1070 862,1170 850,1240 838,1220', '#c9f1c2') + area('585,209 630,209 620,250 600,240', '#c9f1c2');
  const white = ['352,540 560,1000 700,1330 800,1551', '261,790 330,640', '280,860 400,660', '261,900 440,1060 300,1300', '290,1078 440,1350 300,1551', '330,1180 470,850', '576,660 440,1030 400,1130', '500,480 545,560 600,500', '555,640 620,560', '261,1400 440,1350 500,1250', '480,960 420,900 350,1000', '590,900 700,900 760,1030', '560,1010 650,1150 620,1300 700,1551', '520,1110 600,1180 760,1160', '690,640 860,600 930,640 1060,560', '900,250 905,380 1100,420 1176,400', '945,209 950,330 1050,330 1060,209', '860,480 850,620 980,640 1000,780', '870,700 940,720 1000,690', '800,740 900,780 960,760', '905,380 870,500 760,560', '700,310 660,380 650,500', '740,420 830,350 900,209', '1030,640 1060,540 1120,480 1176,520', '950,800 900,880 890,990 840,1060', '1176,430 1110,520 1040,640 960,800', '730,1300 760,1440 700,1500', '640,1250 740,1280 830,1230', '900,1400 880,1551', '990,1480 1090,1400 1176,1440', '1040,1551 1080,1480 1176,1520', '1050,1270 1090,1200 1176,1280', '1090,1300 1120,1240', '480,700 600,560', '352,620 300,760 420,780', '560,760 500,900 590,960', '1000,1340 1050,1420 1100,1300', '640,1000 690,1060 660,1180', '545,280 560,420 620,500', '640,340 780,300', '920,700 905,800', '860,1000 940,1000'];
  white.forEach(p => { h += path(p, 'stroke="#e2e0dc" stroke-width="2"') + path(p, 'stroke="#fff" stroke-width="1.400"'); });
  ['1176,270 1120,300 1080,340 1000,375 920,382 850,410 780,480 720,560 680,640 655,760 625,800 620,900 640,925 665,900', '575,645 610,740 620,600', '640,735 690,715 715,780 722,860 750,1010', '860,1250 880,1230 915,1280 960,1400'].forEach(p => { h += path(p, 'stroke="#bcc2cf" stroke-width="3.600"') + path(p, 'stroke="#dfe3ea" stroke-width="2.200"'); });
  ['680,480 690,700 740,860 800,1100 830,1220', '560,1300 620,1000 640,700 690,420'].forEach(p => { h += path(p, 'stroke="#ccc" stroke-width=".8" stroke-dasharray="3 2"'); });
  ['570,209 600,300 635,480 640,600 625,780 600,880 560,1010 520,1110 470,1250 400,1450 375,1551', '665,209 700,310 740,420 775,510 800,740 825,890 850,1000 858,1060 840,1220', '628,560 622,700 660,900 760,1160 800,1235 880,1330 960,1430 1020,1480 1110,1551', '440,1350 520,1440 640,1551'].forEach((p, i) => { h += path(p, `stroke="#eebc62" stroke-width="${i === 3 ? 2.5 : 5}"`) + path(p, `stroke="#fddc8b" stroke-width="${i === 3 ? 1.8 : 3.8}"`); });
  h += path('570,209 640,340 715,480 745,580 790,760 830,880 858,1060 860,1250 845,1380 812,1551', 'stroke="#b5683c" stroke-width="1.200"');

  const brown = '#a0622d', blue = '#5b7ba6', gray = '#8a8a8a', red = '#9b4a3c', gold = '#b0761b', dark = '#444';
  const labels = [[614, 229, '厦门海堤', '#3f8f4f'], [614, 259, '纪念公园', '#3f8f4f'], [793, 262, '嘉福花园一期', blue], [972, 252, '港中路', gray], [1105, 281, '蓝海园', blue], [1051, 328, '万翔国际', blue], [1051, 358, '商务中心', blue], [1100, 411, '福建万翔现代', blue], [1100, 442, '物流有限公司', blue], [692, 422, '高崎小学', red], [992, 433, '诚信隆商场', gold], [946, 514, '迎宾隆商场', gold], [579, 522, '夏商国际水产', gold], [579, 553, '交易中心', gold], [909, 633, '高崎北三路', gray], [957, 689, '厦门台湾水果', gold], [957, 719, '销售集散中心', gold], [833, 733, '夏商国际商城', gold], [752, 799, '南泉大厦', blue], [471, 863, '国贸园', blue], [683, 921, '厦门轨道交通', blue], [683, 951, '集团高崎综合楼', blue], [822, 918, '高崎', dark], [866, 912, '中埔社', blue], [1131, 1177, '厦门红点', red], [1138, 1207, '设计博物馆', red], [1115, 1284, '云泰国际', blue], [586, 1338, '陈胜元故居', red], [655, 1337, '厦门市高殿', red], [655, 1367, '中心小学', red], [668, 1437, '高殿文化中心', '#3f8f4f'], [552, 1475, '高殿大厦', blue], [756, 1498, '佳得乐商场', gold], [1043, 1361, '空港佰翔', blue], [1043, 1391, '花园酒店', blue], [1000, 1372, '中心', blue], [1160, 1457, '商邦商', blue], [1171, 1539, '水', blue]];
  labels.forEach(([x, y, s, c]) => { h += `<text x="${X(x)}" y="${+Y(y) + 2.6}" fill="${c}">${s}</text>`; });
  const rot = [[772, 334, '高崎北路', gray, 40], [612, 410, '港东路', gray, 82], [748, 430, '嘉禾路', brown, 68], [514, 516, '渔港路', gray, 72], [850, 553, '高崎北二路', gray, 88], [1038, 606, '高崎北路', gray, -66], [528, 712, '港中路', gray, -45], [615, 834, '长岸路', brown, -75], [525, 914, '港东路', gray, -52], [848, 1003, '嘉禾路', brown, 82], [388, 1060, '港兴一路', gray, 40], [655, 1090, '高殿路', gray, 48], [494, 1197, '长岸路', brown, -70], [397, 1328, '港兴路', gray, -72], [852, 1328, '嘉禾路', brown, 88], [743, 1372, '殿前三路', gray, 70], [988, 1470, '成功大道', brown, 42], [1156, 1377, '翔云三路', gray, -45], [1100, 1350, '翔云路', gray, 65]];
  rot.forEach(([x, y, s, c, a]) => { h += `<text transform="translate(${X(x)} ${Y(y)}) rotate(${a})" y="2.600" fill="${c}">${s}</text>`; });
  [[578, 490, '#f7a823'], [949, 435, '#f7a823'], [946, 481, '#f7a823'], [833, 699, '#f7a823'], [906, 706, '#f7a823'], [756, 1465, '#f7a823'], [692, 388, '#d9714d'], [586, 1305, '#d9714d'], [655, 1303, '#d9714d'], [1095, 1194, '#d9714d'], [822, 886, '#e8622c'], [793, 229, '#7aa3d4'], [1075, 282, '#7aa3d4'], [1014, 345, '#7aa3d4'], [752, 766, '#7aa3d4'], [683, 886, '#7aa3d4'], [866, 879, '#7aa3d4'], [1115, 1250, '#7aa3d4'], [1043, 1328, '#7aa3d4'], [988, 1408, '#7aa3d4'], [552, 1441, '#7aa3d4'], [435, 1500, '#7aa3d4'], [669, 1403, '#4caf6e']].forEach(([x, y, c]) => {
    const px = +X(x), py = +Y(y);
    h += `<circle cx="${px}" cy="${py}" r="4" fill="${c}"/><path d="M${px - 1.5} ${py + 3.500}h3l-1.500 2z" fill="${c}"/><rect x="${px - 1.6}" y="${py - 1.500}" width="3.200" height="3" rx=".8" fill="#fff"/>`;
  });
  [[1100, 378], [471, 830]].forEach(([x, y]) => { h += `<circle cx="${X(x)}" cy="${Y(y)}" r="1.800" fill="#fff" stroke="#b98"/>`; });
  [[776, 523, 'S507', '#f0a45c'], [808, 823, 'S507', '#f0a45c'], [843, 1422, 'S507', '#f0a45c'], [578, 954, 'G319', '#ee7b62'], [741, 562, '1号线', '#ee6a26'], [859, 1167, '1号线', '#ee6a26']].forEach(([x, y, s, c]) => {
    h += `<rect x="${X(x) - 8}" y="${Y(y) - 4.500}" width="16" height="9" rx="${s[0] === '1' ? 4.5 : 1}" fill="${c}" stroke="#fff" stroke-width=".6"/><text x="${X(x)}" y="${+Y(y) + 2}" style="font-size:5.500px;stroke:none;fill:#fff">${s}</text>`;
  });
  h += path('290,1078 308,1086 292,1142 317,1190 468,806 576,668 640,840 722,1060 800,1268 812,1270 834,1220 976,1426 1078,1272 1122,1392 1155,1350 1170,1322 1155,1285', 'stroke="#ff6b6b" stroke-width="2.800"');
  [[290, 1075, 19], [317, 1188, 1], [468, 804, 3], [722, 1028, 8], [773, 1265, 11], [798, 1257, 20], [976, 1420, 13], [1078, 1270, 15], [1155, 1288, 18], [1155, 1348, 17]].forEach(([x, y, n]) => {
    const px = +X(x), py = +Y(y);
    h += `<ellipse cx="${px + 6}" cy="${py - 8}" rx="7" ry="3" fill="rgba(0,0,0,.28)" transform="rotate(-50 ${px + 6} ${py - 8})"/><use href="#i-pin" x="${px - 6.500}" y="${py - 18.500}" width="13" height="19"/><text class="pinno" x="${px}" y="${py - 9.300}">${n}</text>`;
  });
  // pan and zoom controls
  h += '<circle cx="17" cy="22" r="14.200" fill="#f4f6f6" stroke="#b8c0c6"/><circle cx="17" cy="22" r="4.500" fill="#e6e8e8"/><path d="M14 14.500l3-3 3 3M14 29.500l3 3 3-3M9.500 19l-3 3 3 3M24.500 19l3 3-3 3" fill="none" stroke="#555" stroke-width="1.400"/><rect x="14" y="3.500" width="6" height="5" fill="#1e6fa8" stroke="#fff" stroke-width=".5"/><text x="17" y="8" style="font-size:5px;stroke:none;fill:#fff">北</text>';
  h += '<rect x="12" y="42" width="10.500" height="77" rx="2" fill="#f5f6f6" stroke="#c8ccd0"/><rect x="15.700" y="54" width="3" height="54" rx="1.500" fill="#c5cfe0"/><rect x="15.700" y="66" width="3" height="42" rx="1.500" fill="#2196f3"/><circle cx="17.200" cy="65" r="4" fill="#f4f6f6" stroke="#4a90c2"/><path d="M15 46.500h4.500M17.250 44.200v4.600M15 113.700h4.500" stroke="#555" stroke-width="1.200"/>';
  h += '<rect x="477" y="3" width="14" height="13" rx="1" fill="#3b93d8"/><text x="484.500" y="12.700" style="font-size:8px;stroke:none;fill:#fff;font-weight:700">地</text>';
  h += '<path d="M0 146h5q4 0 4 4v23q0 4-4 4H0z" fill="#e2e1df"/><path d="M6 157.500v7l-4-3.500z" fill="#999"/><path d="M489 139l-8 5q-3 2-3 5v18q0 3 3 5l8 5z" fill="#fff"/><path d="M482.500 155l3 6-3 6" fill="none" stroke="#999"/>';
  h += '<rect x="0" y="332" width="14" height="15" fill="#fff"/><path d="M0 334h8l6 6-9 7H0z" fill="#1f6fe0"/><path d="M8 333h6v8z" fill="#2bb24c"/><path d="M4 343l6-6" stroke="#fff" stroke-width="2"/><rect x="58" y="338" width="166" height="9" fill="rgba(255,255,255,.5)"/>';
  h += '<text x="38" y="343" style="font-size:10.300px;fill:#888">腾讯地图</text><text x="64" y="344.600" textLength="158" style="font-size:7.500px;text-anchor:start;fill:#444">©2019 Tencent - GS(2018)2236号 - Data© NavInfo</text>';
  document.getElementById('map').innerHTML = h;
})();
```
